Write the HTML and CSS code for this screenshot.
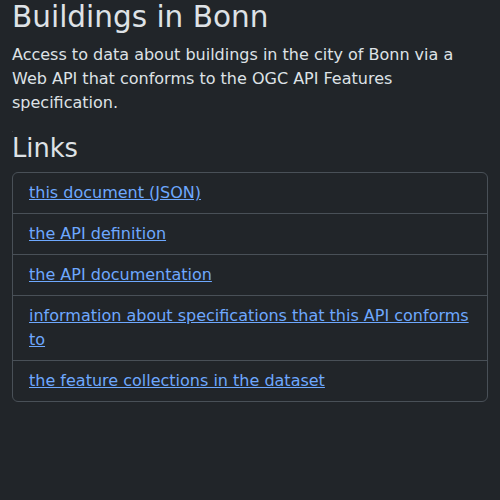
FILE: index.html
```html
<!DOCTYPE html>
<html lang="en">
<head>
<meta charset="utf-8">
<title>Buildings in Bonn</title>
<link rel="stylesheet" href="styles.css">
</head>
<body>
<main class="container">
  <h1 class="title">Buildings in Bonn</h1>
  <p class="lead-text">Access to data about buildings in the city of Bonn via a Web API that conforms to the OGC API Features specification.</p>
  <span class="marker"></span>
  <h2 class="section-title">Links</h2>
  <ul class="list-group">
    <li class="list-item"><a href="#">this document (JSON)</a></li>
    <li class="list-item"><a href="#">the API definition</a></li>
    <li class="list-item"><a href="#">the API documentation</a></li>
    <li class="list-item"><a href="#">information about specifications that this API conforms to</a></li>
    <li class="list-item"><a href="#">the feature collections in the dataset</a></li>
  </ul>
</main>
</body>
</html>
```
FILE: styles.css
```css
html, body {
  margin: 0;
  padding: 0;
  background: #212529;
}
body {
  color: #dee2e6;
  font-family: "DejaVu Sans", sans-serif;
  font-size: 16px;
  line-height: 1.5;
}
.container {
  padding: 0 12px;
  display: flex;
  flex-direction: column;
}
.title {
  margin: 0 0 8px;
  font-size: 29.5px;
  font-weight: 500;
  line-height: 1.2;
}
.lead-text {
  margin: 0 0 16px;
}
.marker {
  display: block;
  width: 1px;
  height: 1px;
  background: #3a3f44;
  margin-bottom: 1px;
}
.section-title {
  margin: 0 0 8px;
  font-size: 25.7px;
  font-weight: 500;
  line-height: 1.2;
}
.list-group {
  list-style: none;
  margin: 0;
  padding: 0;
  border: 1px solid #495057;
  border-radius: 6px;
}
.list-item {
  padding: 8px 16px;
  border-top: 1px solid #495057;
}
.list-item:first-child {
  border-top: none;
}
.list-item a {
  color: #6ea8fe;
  text-decoration: underline;
}
```
